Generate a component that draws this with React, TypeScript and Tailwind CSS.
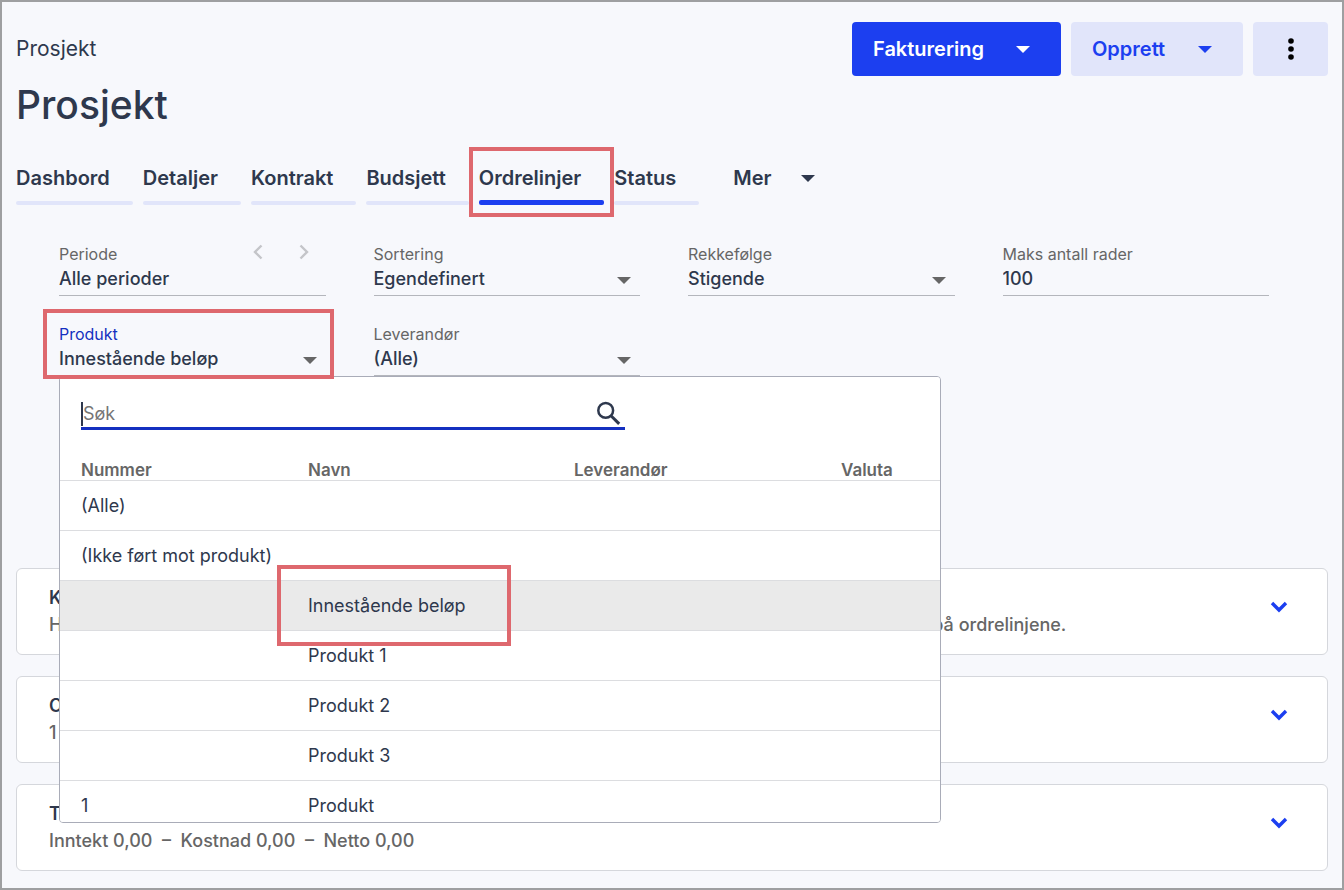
import { useState } from 'react';
import clsx from 'clsx';

const tabs = ['Dashbord', 'Detaljer', 'Kontrakt', 'Budsjett', 'Ordrelinjer', 'Status'];

const products = [
  { id: 'all', number: '(Alle)', name: '' },
  { id: 'none', number: '(Ikke ført mot produkt)', name: '' },
  { id: 'balance', number: '', name: 'Innestående beløp' },
  { id: 'p1', number: '', name: 'Produkt 1' },
  { id: 'p2', number: '', name: 'Produkt 2' },
  { id: 'p3', number: '', name: 'Produkt 3' },
  { id: 'p', number: '1', name: 'Produkt' },
];

const sections = [
  {
    title: 'Kontraktsbeløp',
    text: 'Her kan du se hvordan beløpene fra kontrakten er fordelt på produktene, og hvilke summer som er ført på ordrelinjene.',
  },
  { title: 'Ordrelinjer', text: '1 ordrelinje' },
  { title: 'Tall', text: 'Inntekt 0,00 \u00a0–\u00a0 Kostnad 0,00 \u00a0–\u00a0 Netto 0,00' },
];

const labelClass = 'block text-base leading-5 text-[#666]';
const valueClass = 'block h-8 w-full appearance-none border-b border-[#b4b6bc] bg-transparent pb-0.5 text-left text-lg font-medium leading-6 text-[#2e384d] outline-none';

function Caret({ className }: { className?: string }) {
  return (
    <svg viewBox="0 0 14 7" className={clsx('h-[7px] w-[14px] shrink-0', className)} fill="currentColor" aria-hidden="true">
      <path d="M0 0h14L7 7z" />
    </svg>
  );
}

function Chevron({ d, className }: { d: string; className?: string }) {
  return (
    <svg viewBox="0 0 24 24" className={clsx('size-6', className)} fill="none" stroke="currentColor" aria-hidden="true">
      <path d={d} />
    </svg>
  );
}

function Highlight({ className }: { className: string }) {
  return <span className={clsx('pointer-events-none absolute z-20 border-4 border-[#de686e]', className)} />;
}

function SelectField({ id, label, options }: { id: string; label: string; options: string[] }) {
  return (
    <div>
      <label htmlFor={id} className={labelClass}>
        {label}
      </label>
      <div className="relative">
        <select id={id} className={valueClass}>
          {options.map((o) => (
            <option key={o}>{o}</option>
          ))}
        </select>
        <Caret className="pointer-events-none absolute right-[9px] top-[13px] text-[#666]" />
      </div>
    </div>
  );
}

function ProductMenu({ selected, onSelect }: { selected: string; onSelect: (id: string) => void }) {
  const [query, setQuery] = useState('');
  const rows = products.filter((p) => `${p.number} ${p.name}`.toLowerCase().includes(query.toLowerCase()));

  return (
    <div className="absolute left-0 top-full z-10 h-[447px] w-[882px] overflow-y-auto rounded border border-[#a9acb8] bg-white [scrollbar-width:none]">
      <div className="ml-[21px] mt-5 flex h-[33px] w-[544px] items-center border-b-3 border-[#1430c0]">
        <input
          autoFocus
          aria-label="Søk"
          placeholder="Søk"
          value={query}
          onChange={(e) => setQuery(e.target.value)}
          className="mt-1 min-w-0 flex-1 border-l-2 border-[#2e384d] bg-transparent text-lg leading-6 text-[#2e384d] caret-transparent outline-none placeholder:text-[#757575]"
        />
        <button type="button" aria-label="Søk etter produkt" className="text-[#2e384d]">
          <svg viewBox="0 0 32 32" className="size-8" fill="none" stroke="currentColor" strokeWidth="2.5" aria-hidden="true">
            <circle cx="12.7" cy="14.4" r="7.4" />
            <path d="M18 19.7l8.2 8.2" strokeWidth="3" />
          </svg>
        </button>
      </div>
      <table className="mt-[30px] w-full table-fixed text-left">
        <thead>
          <tr className="h-5 border-b border-[#dcdde0] text-[17px] leading-5 text-[#666]">
            <th className="w-[227px] pl-[21px] font-semibold">Nummer</th>
            <th className="w-[266px] pl-[21px] font-semibold">Navn</th>
            <th className="w-[267px] pl-[21px] font-semibold">Leverandør</th>
            <th className="pl-[21px] font-semibold">Valuta</th>
          </tr>
        </thead>
        <tbody>
          {rows.map((p) => (
            <tr
              key={p.id}
              onClick={() => onSelect(p.id)}
              className={clsx('h-[50px] border-b border-[#dcdde0] text-lg leading-6 text-[#2e384d]', p.id === selected && 'bg-[#eaeaea]')}
            >
              <td className="whitespace-nowrap pl-[21px]">{p.number}</td>
              <td className="relative pl-[21px]">
                {p.name}
                {p.id === 'balance' && <Highlight className="-inset-y-4 -left-[10px] w-[234px]" />}
              </td>
              <td />
              <td />
            </tr>
          ))}
        </tbody>
      </table>
    </div>
  );
}

export default function App() {
  const [activeTab, setActiveTab] = useState('Ordrelinjer');
  const [product, setProduct] = useState('balance');
  const [menuOpen, setMenuOpen] = useState(true);
  const [maxRows, setMaxRows] = useState('100');
  const current = products.find((p) => p.id === product);

  return (
    <main className="min-h-screen border-2 border-[#9e9fa1] bg-[#f7f8fc] px-3.5 pb-4 pt-5 font-[Inter,sans-serif] text-[#2e384d]">
      <header className="flex items-start justify-between">
        <div>
          <p className="flex h-[54px] items-center text-[21px]">Prosjekt</p>
          <h1 className="text-[39px] font-medium leading-[58px]">Prosjekt</h1>
        </div>
        <div className="flex gap-2.5 text-xl font-semibold">
          <button type="button" className="flex h-[54px] w-[209px] items-center justify-between rounded bg-[#1c3ff0] pl-[21px] pr-[31px] text-white">
            Fakturering
            <Caret />
          </button>
          <button type="button" className="flex h-[54px] w-[172px] items-center justify-between rounded bg-[#e1e5fa] pl-[21px] pr-[31px] text-[#1c3ff0]">
            Opprett
            <Caret />
          </button>
          <button type="button" aria-label="Flere valg" className="flex h-[54px] w-[75px] items-center justify-center rounded bg-[#e1e5fa] text-black">
            <svg viewBox="0 0 6 22" className="h-[22px] w-[6px]" fill="currentColor" aria-hidden="true">
              <circle cx="3" cy="3" r="2.8" />
              <circle cx="3" cy="11" r="2.8" />
              <circle cx="3" cy="19" r="2.8" />
            </svg>
          </button>
        </div>
      </header>

      <nav className="mt-[30px] flex items-start gap-2.5 text-xl font-semibold">
        {tabs.map((tab) => (
          <button
            key={tab}
            type="button"
            onClick={() => setActiveTab(tab)}
            className="relative flex h-[41px] flex-col justify-between text-left leading-7"
          >
            <span className="pr-[23px]">{tab}</span>
            <span className={clsx('w-full rounded-xs', tab === activeTab ? 'h-[5px] bg-[#1c3ff0]' : 'h-1 bg-[#e1e5fa]')} />
            {tab === 'Ordrelinjer' && <Highlight className="-bottom-3 -left-2.5 -right-2.5 -top-[17px]" />}
          </button>
        ))}
        <button type="button" className="ml-6 flex items-center gap-[30px] leading-7">
          Mer
          <Caret />
        </button>
      </nav>

      <form className="ml-[43px] mr-[59px] mt-[39px] grid grid-cols-4 gap-x-12 gap-y-7">
        <div className="relative">
          <label htmlFor="period" className={labelClass}>
            Periode
          </label>
          <input id="period" defaultValue="Alle perioder" className={valueClass} />
          <div className="absolute -top-1 right-2.5 flex gap-[22px] text-[#c4c5c9]">
            <button type="button" aria-label="Forrige periode">
              <Chevron d="M15.5 5.5L9 12l6.5 6.5" className="stroke-[2.4]" />
            </button>
            <button type="button" aria-label="Neste periode">
              <Chevron d="M8.5 5.5L15 12l-6.5 6.5" className="stroke-[2.4]" />
            </button>
          </div>
        </div>
        <SelectField id="sorting" label="Sortering" options={['Egendefinert', 'Dato', 'Produkt']} />
        <SelectField id="order" label="Rekkefølge" options={['Stigende', 'Synkende']} />
        <div>
          <label htmlFor="max-rows" className={labelClass}>
            Maks antall rader
          </label>
          <input id="max-rows" value={maxRows} onChange={(e) => setMaxRows(e.target.value)} className={valueClass} />
        </div>
        <div className="relative">
          <label htmlFor="product" className="block text-base leading-5 text-[#1430c0]">
            Produkt
          </label>
          <button id="product" type="button" aria-expanded={menuOpen} onClick={() => setMenuOpen(!menuOpen)} className={valueClass}>
            {current?.name || current?.number}
          </button>
          <Caret className="pointer-events-none absolute bottom-3 right-[9px] text-[#666]" />
          {menuOpen && <ProductMenu selected={product} onSelect={setProduct} />}
          <Highlight className="-bottom-[3px] -left-4 -right-2 -top-[15px]" />
        </div>
        <SelectField id="supplier" label="Leverandør" options={['(Alle)']} />
      </form>

      <div className="mt-48 flex flex-col gap-[21px]">
        {sections.map((s) => (
          <section key={s.title} className="flex items-start justify-between rounded-md border border-[#d5d7dc] bg-white pb-4 pl-8 pr-9 pt-[15px]">
            <div className="text-lg leading-[27px]">
              <h2 className="font-semibold">{s.title}</h2>
              <p className="font-medium text-[#666]">{s.text}</p>
            </div>
            <button type="button" aria-label={`Vis ${s.title}`} className="mt-2.5 text-[#1c3ff0]">
              <Chevron d="M5 9l7 7 7-7" className="stroke-[3.4]" />
            </button>
          </section>
        ))}
      </div>
    </main>
  );
}
